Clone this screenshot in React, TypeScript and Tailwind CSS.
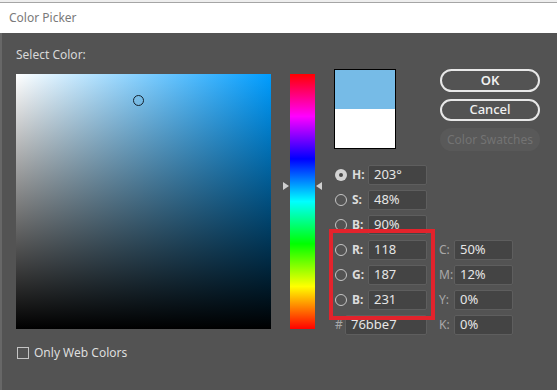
import React from "react";

const Radio = ({ on }: { on?: boolean }) =>
  on ? (
    <div className="w-[12px] h-[12px] rounded-full bg-[#d4d4d4] flex items-center justify-center">
      <div className="w-[4px] h-[4px] rounded-full bg-[#4a4a4a]" />
    </div>
  ) : (
    <div className="w-[12px] h-[12px] rounded-full border-[1.5px] border-[#c4c4c4]" />
  );

const Field = ({ value, w = "w-[59px]" }: { value: string; w?: string }) => (
  <div className={`${w} h-[20px] bg-[#444444] border border-[#5e5e5e] rounded-[2px] pl-[5px] flex items-center text-[13px] text-[#e6e6e6]`}>
    {value}
  </div>
);

type Row = { key: string; label: string; value: string; on?: boolean; right?: [string, string] };

const rows: Row[] = [
  { key: "h", label: "H:", value: "203°", on: true },
  { key: "s", label: "S:", value: "48%" },
  { key: "b", label: "B:", value: "90%" },
  { key: "r", label: "R:", value: "118", right: ["C:", "50%"] },
  { key: "g", label: "G:", value: "187", right: ["M:", "12%"] },
  { key: "bb", label: "B:", value: "231", right: ["Y:", "0%"] },
];

export default function App() {
  return (
    <div className="w-[557px] h-[390px] bg-[#535353] overflow-hidden relative flex flex-col font-['Noto_Sans',sans-serif]">
      {/* strip of window behind */}
      <div className="h-[3px] bg-[#eeeeee] border-b border-[#a5a5a5] shrink-0" />

      {/* Title bar */}
      <div className="h-[30px] bg-white flex items-center pl-[9px] text-[12px] text-[#7a7a7a] shrink-0">
        Color Picker
      </div>

      {/* Body */}
      <div className="flex-1 border-l-2 border-[#676767] pl-[14px] pt-[14px] relative">
        <div className="text-[12px] leading-[16px] text-[#d8d8d8]">Select Color:</div>

        <div className="flex items-start mt-[6px]">
          {/* Saturation / brightness field */}
          <div className="mt-[5px] w-[255px] h-[255px] relative bg-[linear-gradient(to_top,#000_0%,transparent_100%),linear-gradient(to_right,#fff_0%,#009dff_100%)]">
            <div className="absolute left-[117px] top-[21px] w-[11px] h-[11px] rounded-full border-[1.5px] border-[#13202c]" />
          </div>

          {/* Hue slider */}
          <div className="mt-[5px] ml-[19px] w-[25px] h-[255px] relative bg-[linear-gradient(to_bottom,#ff0000_0%,#ff00ff_16.6%,#0000ff_33.3%,#00ffff_50%,#00ff00_66.6%,#ffff00_83.3%,#ff0000_100%)]">
            <div className="absolute left-[-7px] top-[108px] w-0 h-0 border-y-[4px] border-y-transparent border-l-[6px] border-l-[#cfcfcf]" />
            <div className="absolute right-[-7px] top-[108px] w-0 h-0 border-y-[4px] border-y-transparent border-r-[6px] border-r-[#cfcfcf]" />
          </div>

          {/* Right side */}
          <div className="ml-[19px] flex flex-col">
            <div className="flex items-start">
              <div className="w-[62px] h-[80px] border border-black flex flex-col">
                <div className="h-[39px] bg-[#76bbe7]" />
                <div className="flex-1 bg-white" />
              </div>
              <div className="ml-[44px] flex flex-col gap-[7px]">
                <div className="w-[100px] h-[23px] rounded-full border-2 border-[#e8e8e8] flex items-center justify-center text-[13px] font-semibold text-[#f0f0f0]">
                  OK
                </div>
                <div className="w-[100px] h-[22px] rounded-full border-2 border-[#e8e8e8] flex items-center justify-center text-[13px] font-medium text-[#f0f0f0]">
                  Cancel
                </div>
                <div className="w-[100px] h-[23px] rounded-full bg-[#595959] flex items-center justify-center text-[12px] text-[#737373]">
                  Color Swatches
                </div>
              </div>
            </div>

            <div className="mt-[14px] flex flex-col gap-[5px]">
              {rows.map((r) => (
                <div key={r.key} className="flex items-center h-[20px]">
                  <div className="ml-[1px]">
                    <Radio on={r.on} />
                  </div>
                  <div className="ml-[5px] w-[16px] text-[12px] font-bold text-[#dcdcdc]">{r.label}</div>
                  <Field value={r.value} />
                  {r.right && (
                    <>
                      <div className="ml-[12px] w-[15px] text-[12px] text-[#a8a8a8]">{r.right[0]}</div>
                      <Field value={r.right[1]} />
                    </>
                  )}
                </div>
              ))}
              <div className="flex items-center h-[20px]">
                <div className="ml-[1px] w-[10px] text-[12px] text-[#a8a8a8]">#</div>
                <Field value="76bbe7" w="w-[82px]" />
                <div className="ml-[12px] w-[15px] text-[12px] text-[#a8a8a8]">K:</div>
                <Field value="0%" />
              </div>
            </div>
          </div>
        </div>

        {/* Only Web Colors */}
        <div className="flex items-center mt-[9px] ml-[1px]">
          <div className="w-[12px] h-[12px] border border-[#c4c4c4]" />
          <div className="ml-[5px] text-[12px] text-[#dedede]">Only Web Colors</div>
        </div>
      </div>

      {/* annotation highlight */}
      <div className="absolute left-[329px] top-[229px] w-[106px] h-[91px] border-[4px] border-[#e3232c]" />
    </div>
  );
}
